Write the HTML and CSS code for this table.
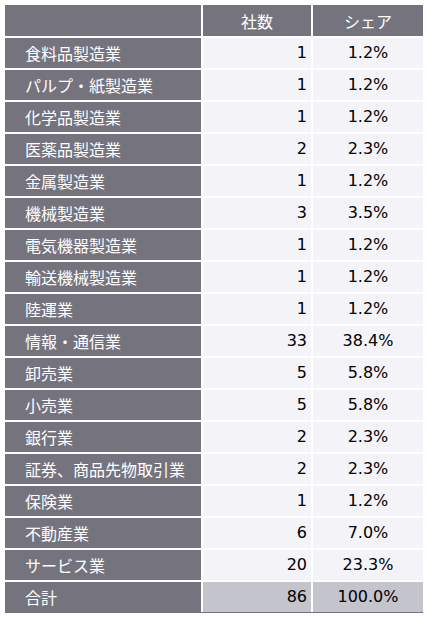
FILE: index.html
```html
<!DOCTYPE html>
<html lang="ja">
<head>
<meta charset="utf-8">
<link rel="stylesheet" href="styles.css">
</head>
<body>
<div class="tbl">
  <div class="hd"></div><div class="hd">社数</div><div class="hd">シェア</div>
  <div class="lb">食料品製造業</div><div class="num">1</div><div class="pct">1.2%</div>
  <div class="lb">パルプ・紙製造業</div><div class="num">1</div><div class="pct">1.2%</div>
  <div class="lb">化学品製造業</div><div class="num">1</div><div class="pct">1.2%</div>
  <div class="lb">医薬品製造業</div><div class="num">2</div><div class="pct">2.3%</div>
  <div class="lb">金属製造業</div><div class="num">1</div><div class="pct">1.2%</div>
  <div class="lb">機械製造業</div><div class="num">3</div><div class="pct">3.5%</div>
  <div class="lb">電気機器製造業</div><div class="num">1</div><div class="pct">1.2%</div>
  <div class="lb">輸送機械製造業</div><div class="num">1</div><div class="pct">1.2%</div>
  <div class="lb">陸運業</div><div class="num">1</div><div class="pct">1.2%</div>
  <div class="lb">情報・通信業</div><div class="num">33</div><div class="pct">38.4%</div>
  <div class="lb">卸売業</div><div class="num">5</div><div class="pct">5.8%</div>
  <div class="lb">小売業</div><div class="num">5</div><div class="pct">5.8%</div>
  <div class="lb">銀行業</div><div class="num">2</div><div class="pct">2.3%</div>
  <div class="lb">証券、商品先物取引業</div><div class="num">2</div><div class="pct">2.3%</div>
  <div class="lb">保険業</div><div class="num">1</div><div class="pct">1.2%</div>
  <div class="lb">不動産業</div><div class="num">6</div><div class="pct">7.0%</div>
  <div class="lb">サービス業</div><div class="num">20</div><div class="pct">23.3%</div>
  <div class="lb">合計</div><div class="num total">86</div><div class="pct total">100.0%</div>
</div>
</body>
</html>
```
FILE: styles.css
```css
html, body {
  margin: 0;
  padding: 0;
  background: #ffffff;
}
body {
  font-family: "DejaVu Sans", "Noto Sans CJK JP", sans-serif;
  font-size: 16px;
}
.tbl {
  display: grid;
  grid-template-columns: 196px 108px 110px;
  grid-template-rows: 31px;
  grid-auto-rows: 30px;
  gap: 2px;
  margin: 5px 0 0 5px;
  width: 418px;
  border-bottom: 1px solid #75747e;
}
.tbl > div {
  display: flex;
  align-items: center;
  line-height: 1;
}
.hd {
  background: #75747e;
  color: #ffffff;
  justify-content: center;
  font-family: "Noto Sans CJK JP", sans-serif;
}
.lb {
  background: #75747e;
  color: #ffffff;
  padding-left: 20px;
  font-family: "Noto Sans CJK JP", sans-serif;
}
.num {
  background: #f3f3f8;
  color: #000000;
  justify-content: flex-end;
  padding-right: 4px;
}
.pct {
  background: #f3f3f8;
  color: #000000;
  justify-content: center;
}
.total {
  background: #c4c4cc;
}
```
